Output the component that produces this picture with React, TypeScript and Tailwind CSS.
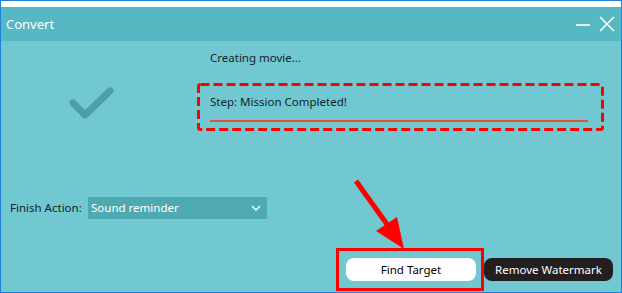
import React from "react";

export default function App() {
  return (
    <div
      className="relative w-[622px] h-[293px] border border-[#1e80d8] bg-white flex flex-col overflow-hidden"
      style={{ fontFamily: '"Noto Sans", "Open Sans", sans-serif' }}
    >
      <div className="h-[6px] bg-white" />
      <div className="h-[34px] bg-[#55b8c3] flex items-center justify-between pl-[5px] pr-[6px]">
        <span className="text-white text-[13px] leading-none">Convert</span>
        <div className="flex items-center gap-[8px]">
          <svg width="16" height="16" viewBox="0 0 16 16">
            <line x1="1" y1="9" x2="15" y2="9" stroke="white" strokeWidth="1.6" />
          </svg>
          <svg width="16" height="16" viewBox="0 0 16 16">
            <line x1="1" y1="1" x2="15" y2="15" stroke="white" strokeWidth="1.6" />
            <line x1="15" y1="1" x2="1" y2="15" stroke="white" strokeWidth="1.6" />
          </svg>
        </div>
      </div>
      <div className="flex-1 bg-[#71c8d0] flex flex-col text-[11.5px] text-[#15232b]">
        <div className="flex h-[90px]">
          <div className="w-[196px] pl-[65px] pt-[42px]">
            <svg width="50" height="40" viewBox="0 0 50 40">
              <polyline
                points="7,20 19,32 44,8"
                fill="none"
                stroke="#4b9fa7"
                strokeWidth="7"
                strokeLinecap="round"
                strokeLinejoin="round"
              />
            </svg>
          </div>
          <div className="flex flex-col pt-[9px]">
            <div className="h-[16px] leading-[16px] pl-[13px]">Creating movie...</div>
            <div className="relative mt-[17px] w-[407px] h-[48px] pl-[13px] pt-[11px]">
              <svg className="absolute left-0 top-0" width="407" height="48" viewBox="0 0 407 48">
                <rect
                  x="1.5"
                  y="1.5"
                  width="404"
                  height="45"
                  rx="2"
                  fill="none"
                  stroke="#ff0000"
                  strokeWidth="3"
                  strokeDasharray="9 4"
                />
              </svg>
              <div className="h-[16px] leading-[16px]">Step: Mission Completed!</div>
              <div className="mt-[10px] w-[378px] h-[2px] bg-[#e0533f]" />
            </div>
          </div>
        </div>
        <div className="mt-[66px] h-[22px] flex items-center pl-[9px]">
          <span className="w-[78px]">Finish Action:</span>
          <div className="w-[179px] h-[22px] bg-[#4fa9b1] flex items-center justify-between pl-[3px] pr-[6px] text-white">
            <span>Sound reminder</span>
            <svg width="10" height="8" viewBox="0 0 10 8">
              <polyline points="1,2 5,6 9,2" fill="none" stroke="white" strokeWidth="1.4" />
            </svg>
          </div>
        </div>
        <div className="mt-[29px] flex justify-end pr-[8px]">
          <div className="w-[148px] h-[43px] border-[3px] border-[#ff0000] pl-[7px] pt-[7px]">
            <div className="w-[130px] h-[23px] rounded-[8px] bg-white text-black flex items-center justify-center">
              Find Target
            </div>
          </div>
          <div className="mt-[10px] w-[129px] h-[23px] rounded-[8px] bg-[#231f20] text-white flex items-center justify-center">
            Remove Watermark
          </div>
        </div>
      </div>
      <svg
        className="absolute left-[-1px] top-[-1px] pointer-events-none"
        width="622"
        height="293"
        viewBox="0 0 622 293"
      >
        <line x1="356" y1="181" x2="389" y2="227" stroke="#ff0000" strokeWidth="5" />
        <polygon points="404,249 376,231 397,217" fill="#ff0000" />
      </svg>
    </div>
  );
}
